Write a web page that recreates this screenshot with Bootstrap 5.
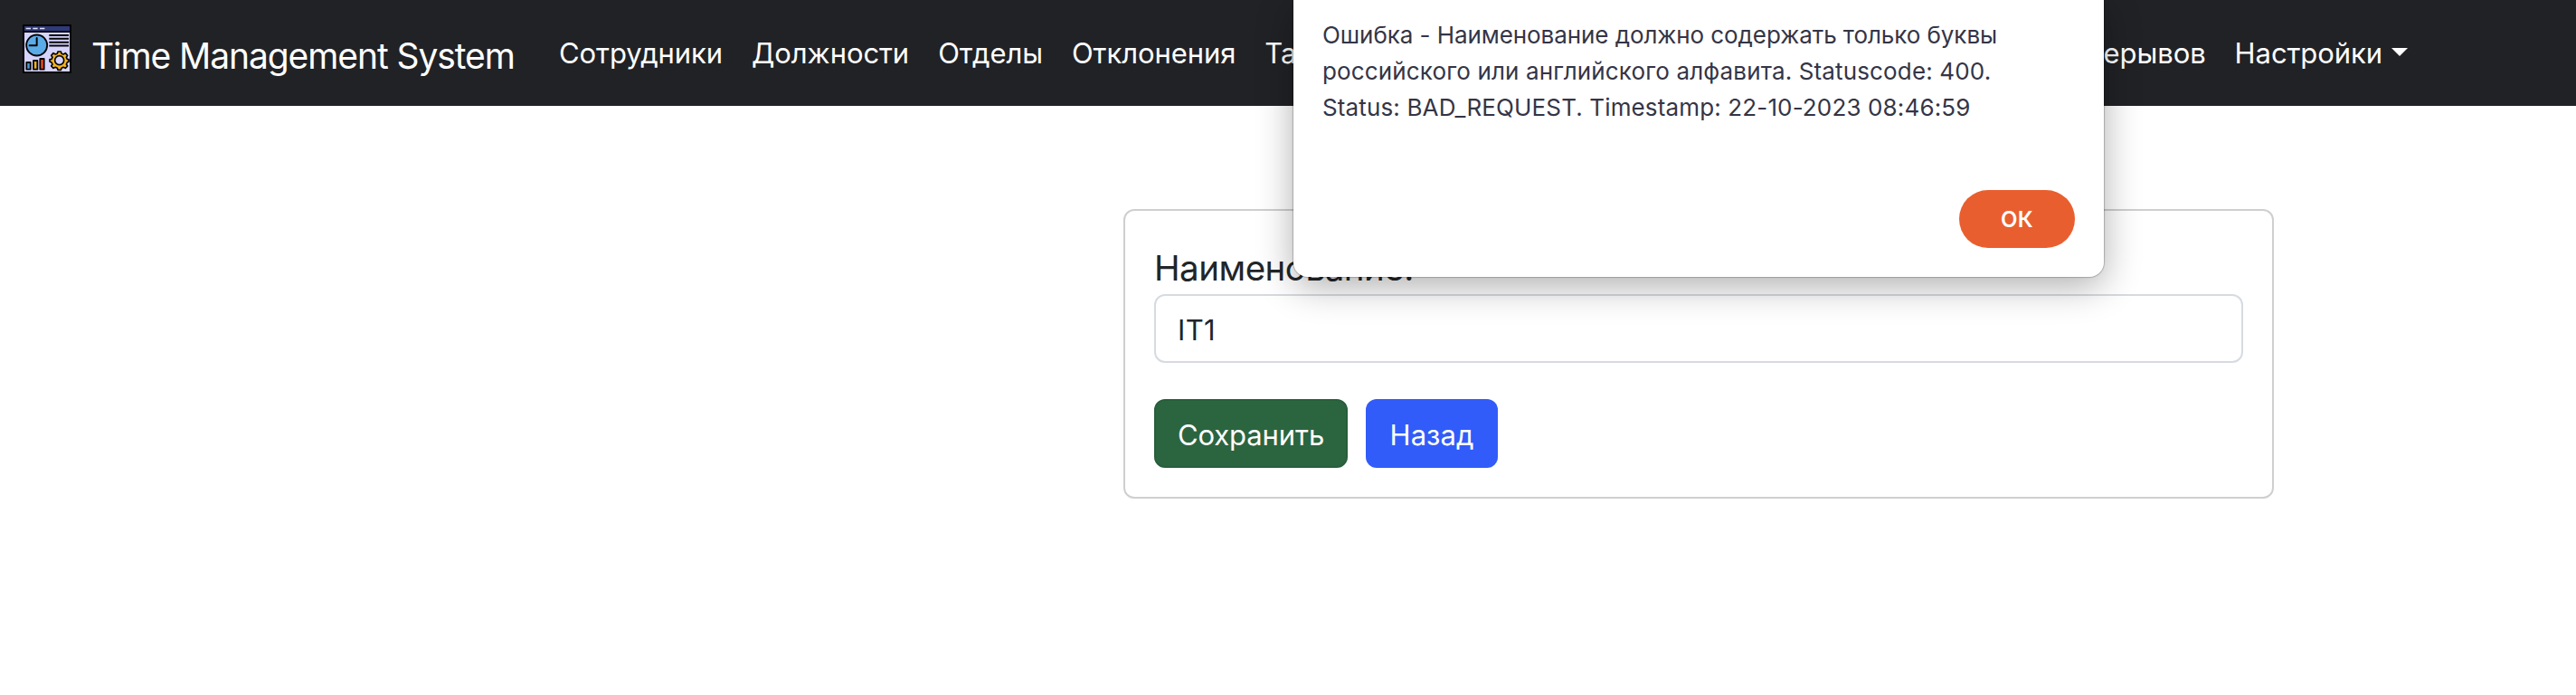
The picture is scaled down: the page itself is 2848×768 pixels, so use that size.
<!DOCTYPE html>
<html lang="ru">
<head>
<meta charset="utf-8">
<meta name="viewport" content="width=device-width, initial-scale=1">
<title>Time Management System</title>
<link href="https://cdn.jsdelivr.net/npm/bootstrap@5.3.0/dist/css/bootstrap.min.css" rel="stylesheet">
<style>
  html { font-size: 32px; }
  body { font-family: Inter, "Liberation Sans", sans-serif; background: #fff; color: #212529; overflow: hidden; }
  .topbar { height: 117px; padding: 0 25px; background: #212226; }
  .topbar .navbar-brand { padding: 0; margin: 0; width: 577px; gap: 22px; font-size: 39px; line-height: 60px; letter-spacing: -1.09px; }
  .brand-icon { width: 54px; height: 54px; margin-bottom: 9px; }
  .brand-text { padding-top: 7px; }
  .topbar .navbar-nav { width: 2076px; }
  .topbar .nav-link { padding: 0 16px; font-size: 31px; line-height: 48px; letter-spacing: -.08px; color: #fff; white-space: nowrap; }
  .topbar .dropdown-toggle::after { margin-left: 10px; border-top-width: 9.6px; border-right-width: 9.6px; border-left-width: 9.6px; vertical-align: 8px; }
  .form-card { width: 1272px; height: 320px; margin: 114px 0 0 1242px; border: 2px solid #cfcfcf; border-radius: 12px; }
  .form-card .card-body { padding: 32px; }
  .form-card label { display: block; font-size: 38.5px; line-height: 62px; letter-spacing: -.5px; height: 60px; }
  .form-card .form-control { height: 76px; border: 2px solid #d6dbe1; border-radius: 12px; padding: 11px 24px 9px; font-size: 31px; color: #212529; letter-spacing: .3px; }
  .form-card .form-actions { margin-top: 40px; gap: 20px; }
  .form-card .btn { height: 76px; border: 2px solid transparent; border-radius: 12px; padding: 12px 0 8px; font-size: 31px; line-height: 48px; color: #fff; }
  .form-card .btn-save { width: 214px; background: #2b6540; border-color: #285e3b; letter-spacing: -.09px; }
  .form-card .btn-back { width: 146px; background: #315cf9; letter-spacing: .05px; }
  .alert-box { top: 0; left: 1430px; width: 896px; height: 306px; padding: 19px 32px 32px; background: #fff; color: #343546; border-radius: 0 0 16px 16px;
    box-shadow: 0 0 1px 1px rgba(0,0,0,.22), 0 10px 40px rgba(0,0,0,.32); z-index: 10; }
  .alert-box p { font-size: 26px; line-height: 40px; white-space: nowrap; }
  .alert-box p span { display: block; }
  .ls-a { letter-spacing: -.074px; }
  .ls-b { letter-spacing: .14px; }
  .btn-ok { width: 128px; height: 64px; padding: 0; border: 0; border-radius: 32px; background: #e95e2f; color: #fff; font-size: 24px; font-weight: 600; line-height: 63px; letter-spacing: .3px; }
</style>
</head>
<body>
<nav class="navbar navbar-expand-lg topbar flex-nowrap justify-content-start">
  <a class="navbar-brand d-flex align-items-center text-white flex-shrink-0" href="#">
    <svg class="brand-icon" viewBox="15 15 162 162" aria-hidden="true">
      <rect x="15" y="15" width="162" height="162" rx="2" fill="#050507"/>
      <rect x="21" y="21" width="150" height="15" fill="#2f3a78"/>
      <path d="M26 28.5h16M49 28.5h16M72 28.5h16" stroke="#e4e2fa" stroke-width="5"/>
      <rect x="21" y="42" width="150" height="129" fill="#d6d4fc"/>
      <circle cx="62" cy="84" r="34.5" fill="#5aabe8" stroke="#050507" stroke-width="5.5"/>
      <path d="M62 60v25H38" fill="none" stroke="#050507" stroke-width="6" stroke-linecap="round" stroke-linejoin="round"/>
      <path d="M103 51h65M103 62.500h65M103 74h65M103 85.500h65" stroke="#050507" stroke-width="6"/>
      <g stroke="#050507" stroke-width="5.500" stroke-linejoin="round">
        <rect x="28" y="141" width="13" height="23" fill="#4d9ddb"/>
        <rect x="51" y="135" width="13" height="29" fill="#f3b41f"/>
        <rect x="73" y="129" width="13" height="35" fill="#ea4a1e"/>
      </g>
      <g fill="#f6b51e" stroke="#050507" stroke-width="5" stroke-linejoin="round">
        <path d="M132 105h10l2 7 6 2 7-4 7 8-4 6 3 6 5 1v7l-5 3-3 6 4 6-7 7-7-3-6 3-2 6h-10l-2-6-6-3-7 3-7-7 4-6-3-6-6-3v-7l6-1 3-6-4-6 7-8 7 4 6-2z"/>
        <circle cx="137" cy="134" r="15" fill="#d6d4fc"/>
      </g>
    </svg>
    <span class="brand-text">Time Management System</span>
  </a>
  <ul class="navbar-nav flex-row flex-shrink-0">
    <li class="nav-item"><a class="nav-link" href="#">Сотрудники</a></li>
    <li class="nav-item"><a class="nav-link" href="#">Должности</a></li>
    <li class="nav-item"><a class="nav-link" href="#">Отделы</a></li>
    <li class="nav-item"><a class="nav-link" href="#">Отклонения</a></li>
    <li class="nav-item"><a class="nav-link" href="#">Таб</a></li>
    <li class="nav-item ms-auto"><a class="nav-link" href="#">перерывов</a></li>
    <li class="nav-item dropdown"><a class="nav-link dropdown-toggle" href="#">Настройки</a></li>
  </ul>
</nav>

<main>
  <form class="card form-card">
    <div class="card-body">
      <label for="unitName">Наименование:</label>
      <input id="unitName" type="text" class="form-control" value="IT1">
      <div class="d-flex form-actions">
        <button type="button" class="btn btn-save">Сохранить</button>
        <button type="button" class="btn btn-back">Назад</button>
      </div>
    </div>
  </form>
</main>

<div class="alert-box position-absolute d-flex flex-column justify-content-between" role="alertdialog">
  <p class="mb-0">
    <span class="ls-a">Ошибка - Наименование должно содержать только буквы</span>
    <span class="ls-b">российского или английского алфавита. Statuscode: 400.</span>
    <span class="ls-b">Status: BAD_REQUEST. Timestamp: 22-10-2023 08:46:59</span>
  </p>
  <button type="button" class="btn btn-ok align-self-end">ОК</button>
</div>
<script src="https://cdn.jsdelivr.net/npm/bootstrap@5.3.0/dist/js/bootstrap.bundle.min.js"></script>
</body>
</html>
